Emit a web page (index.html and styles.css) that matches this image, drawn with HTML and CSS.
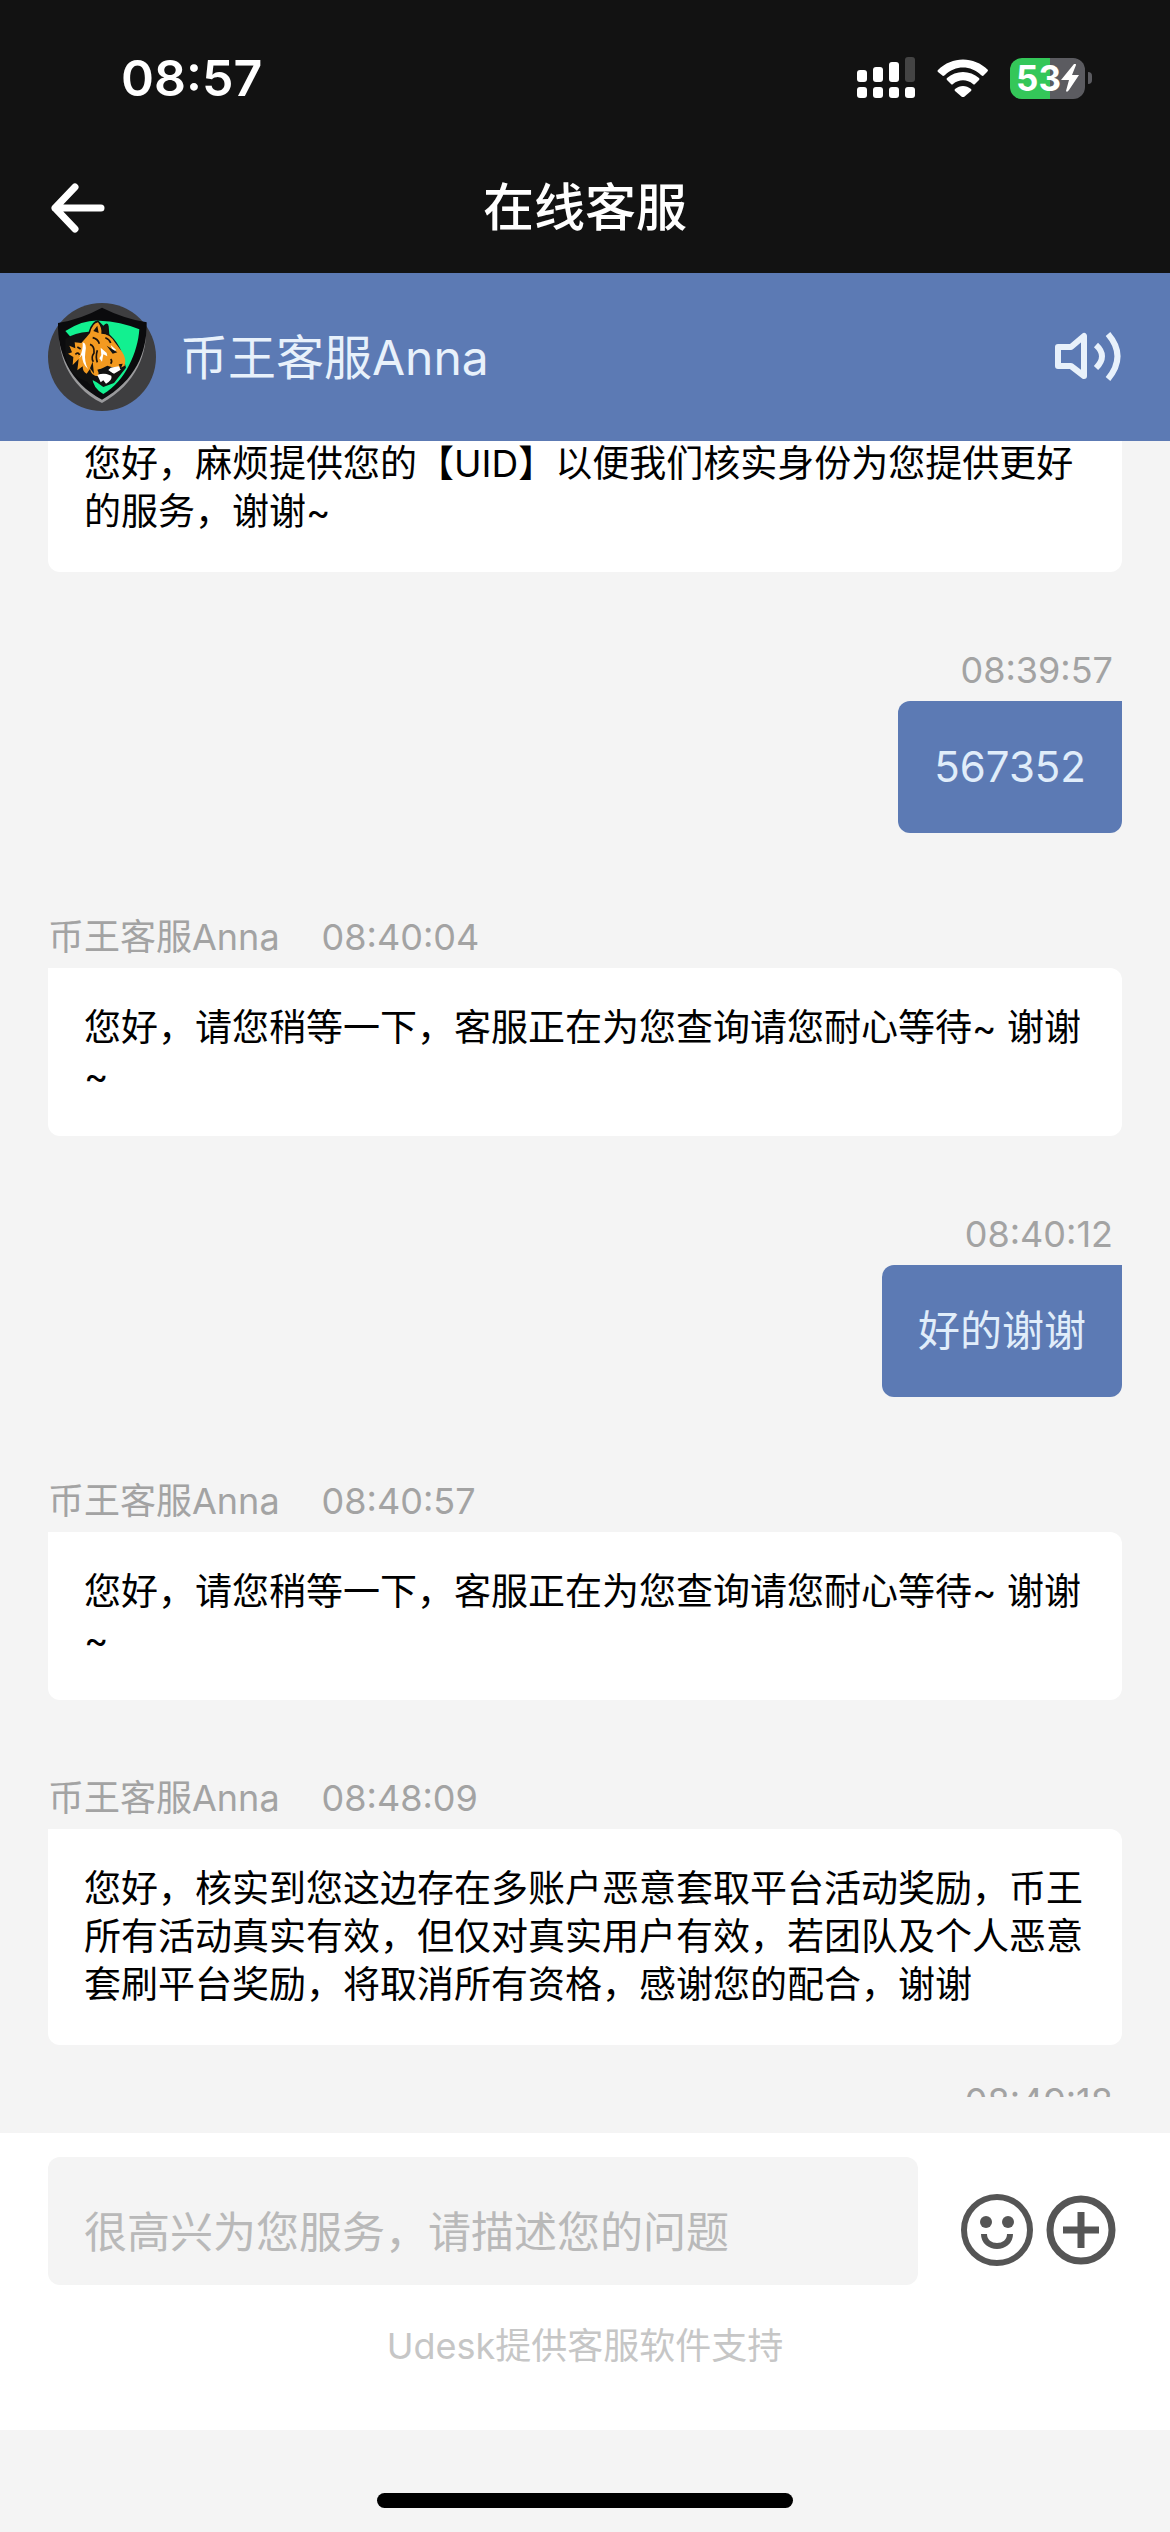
FILE: index.html
```html
<!DOCTYPE html>
<html lang="zh-CN">
  <head>
    <meta charset="utf-8">
    <title>在线客服</title>
    <meta name="viewport" content="width=device-width, initial-scale=1.0">
    <link rel="stylesheet" href="styles.css">
  </head>
  <body>
    <div class="status-bar">
      <span class="clock">08:57</span>
      <div class="status-icons">
        <svg class="signal" width="58" height="42" viewBox="0 0 58 42" fill="#fff">
          <rect x="0" y="13" width="10" height="12" rx="3"/>
          <rect x="16" y="10" width="10" height="15" rx="3"/>
          <rect x="32" y="5" width="10" height="20" rx="3"/>
          <rect x="48" y="0" width="10" height="25" rx="3" fill="#444"/>
          <rect x="0" y="30" width="10" height="11" rx="3"/>
          <rect x="16" y="30" width="10" height="11" rx="3"/>
          <rect x="32" y="30" width="10" height="11" rx="3"/>
          <rect x="48" y="30" width="10" height="11" rx="3"/>
        </svg>
        <svg class="wifi" width="52" height="38" viewBox="0 0 52 38" fill="#fff">
          <path d="M1 11C15-3 37-3 51 11Q51 12 50 13L46 17Q45 17 44 16C34 6 18 6 8 16Q7 17 6 17L1 13Q0 12 1 11Z"/>
          <path d="M10 19C19 11 33 11 42 19Q43 20 42 21L38 25Q37 26 36 25C30 20 22 20 16 25Q15 26 14 25L10 21Q9 20 10 19Z"/>
          <path d="M18 30C23 26 29 26 34 30Q35 31 34 32L27 38Q26 38 25 38L18 32Q17 31 18 30Z"/>
        </svg>
        <div class="battery">
          <div class="battery-body">
            <span>53</span>
            <svg width="18" height="28" viewBox="0 0 18 28" fill="#fff">
              <path d="M13 0L0 16H8L5 27Q6 29 8 26L18 11H11L15 1Q15-1 13 0Z"/>
            </svg>
          </div>
          <div class="battery-tip"></div>
        </div>
      </div>
    </div>

    <header class="nav">
      <button type="button" class="back" aria-label="返回">
        <svg width="56" height="50" viewBox="0 0 56 50" fill="none" stroke="#fff" stroke-width="7" stroke-linecap="round" stroke-linejoin="round">
          <path d="M26 4L6 25L26 46M6 25H52"/>
        </svg>
      </button>
      <h1>在线客服</h1>
    </header>

    <div class="agent">
      <svg class="avatar" width="108" height="108" viewBox="24 38 324 324">
        <circle cx="186" cy="200" r="162" fill="#3e3e40"/>
        <path d="M58 100Q124 88 186 58Q250 88 318 98C324 190 290 280 186 338C84 286 50 190 58 100Z" fill="#9a9a9c"/>
        <path d="M54 98Q124 86 186 52Q250 84 320 96C322 186 286 272 186 328C88 276 52 186 54 98Z" fill="#0b0b0d"/>
        <path d="M76 122Q130 88 178 91Q242 93 298 117C294 184 256 274 190 311Q158 294 156 258L110 160Z" fill="#12f090"/>
        <path d="M76 146Q104 126 146 124Q156 92 174 90L190 106Q204 92 206 108L208 132Q236 158 246 188L258 232L222 278L190 290L170 276L156 268Q158 296 142 274Q84 256 76 190Z" fill="#111"/>
        <path d="M150 128Q158 98 174 96Q186 112 184 130Q210 130 226 158L246 184Q260 204 254 226L234 236L202 226L178 238L174 258Q154 258 150 236L140 250Q128 246 128 228L112 240L116 206L98 224L100 200L84 190L96 186L88 166L106 174L104 156L124 158L140 140Z" fill="#f39a20"/>
        <path d="M188 124L198 104Q206 112 202 134ZM160 122L172 106L176 128Z" fill="#1b120c"/>
        <path d="M128 156Q142 160 136 186Q132 214 144 236Q126 220 126 194L118 204Q130 178 128 156ZM182 172L200 188L202 198L190 192L186 214L178 204L184 194ZM212 164L228 178L220 188ZM212 232L236 228L242 238L222 250L202 242ZM172 254Q186 244 214 256Q218 268 198 280L190 270L182 276Z" fill="#fff"/>
        <path d="M200 166L232 186L218 190ZM172 238Q190 232 206 240L222 252L198 248L178 252ZM236 222L248 220L242 236ZM150 234L158 214L162 250Z" fill="#111"/>
        <path d="M158 142Q174 146 178 160M150 162Q164 166 162 188Q152 202 160 214M196 142Q208 146 212 158M172 180Q166 200 172 216M112 170L122 176M106 192Q116 184 118 194M212 206Q218 212 212 220" fill="none" stroke="#1b120c" stroke-width="5"/>
      </svg>
      <span class="agent-name">币王客服Anna</span>
      <button type="button" class="sound" aria-label="声音">
        <svg width="68" height="54" viewBox="0 0 68 54" fill="none" stroke="#e8f1fb" stroke-width="6">
          <path d="M4 17H17L30 6V46L17 36H4Z" stroke-linejoin="round"/>
          <path d="M42 15Q54 26 42 38"/>
          <path d="M54 4Q73 26 54 49"/>
        </svg>
      </button>
    </div>

    <main class="chat">
      <ul class="messages">
        <li class="message">
          <p class="bubble">您好，麻烦提供您的【UID】以便我们核实身份为您提供更好的服务，谢谢~</p>
        </li>
        <li class="message mine">
          <div class="meta"><time>08:39:57</time></div>
          <p class="bubble">567352</p>
        </li>
        <li class="message">
          <div class="meta"><span>币王客服Anna</span><time>08:40:04</time></div>
          <p class="bubble">您好，请您稍等一下，客服正在为您查询请您耐心等待~ 谢谢~</p>
        </li>
        <li class="message mine">
          <div class="meta"><time>08:40:12</time></div>
          <p class="bubble">好的谢谢</p>
        </li>
        <li class="message">
          <div class="meta"><span>币王客服Anna</span><time>08:40:57</time></div>
          <p class="bubble">您好，请您稍等一下，客服正在为您查询请您耐心等待~ 谢谢~</p>
        </li>
        <li class="message latest">
          <div class="meta"><span>币王客服Anna</span><time>08:48:09</time></div>
          <p class="bubble">您好，核实到您这边存在多账户恶意套取平台活动奖励，币王所有活动真实有效，但仅对真实用户有效，若团队及个人恶意套刷平台奖励，将取消所有资格，感谢您的配合，谢谢</p>
        </li>
        <li class="message mine">
          <div class="meta"><time>08:49:18</time></div>
        </li>
      </ul>
    </main>

    <footer class="composer">
      <form class="composer-row">
        <input type="text" aria-label="问题" placeholder="很高兴为您服务，请描述您的问题">
        <button type="button" aria-label="表情">
          <svg width="74" height="74" viewBox="0 0 74 74" fill="none" stroke="#555" stroke-width="6">
            <circle cx="37" cy="37" r="33"/>
            <circle cx="26" cy="29" r="6" fill="#555" stroke="none"/>
            <circle cx="48" cy="29" r="6" fill="#555" stroke="none"/>
            <path d="M24 41C24 57 50 57 50 41"/>
          </svg>
        </button>
        <button type="button" aria-label="更多">
          <svg width="70" height="70" viewBox="0 0 70 70" fill="none" stroke="#555" stroke-width="7">
            <circle cx="35" cy="35" r="31"/>
            <path d="M17 35H53M35 17V53"/>
          </svg>
        </button>
      </form>
      <p class="powered">Udesk提供客服软件支持</p>
    </footer>

    <div class="home-area"><div class="home-bar"></div></div>
  </body>
</html>
```
FILE: styles.css
```css
* {
  box-sizing: border-box;
}
body {
  margin: 0;
  height: 100vh;
  display: flex;
  flex-direction: column;
  background-color: #f4f4f4;
  font-family: Inter, "Noto Sans CJK SC", sans-serif;
}
button {
  display: flex;
  padding: 0;
  border: none;
  background: none;
  cursor: pointer;
}
p, h1, ul {
  margin: 0;
  padding: 0;
}

/* status bar */
.status-bar {
  flex: none;
  height: 156px;
  padding: 0 78px 0 121px;
  display: flex;
  align-items: center;
  justify-content: space-between;
  background-color: #121212;
  color: #fff;
}
.clock {
  font-size: 50px;
  font-weight: 600;
}
.status-icons {
  display: flex;
  align-items: center;
}
.wifi {
  margin: 0 21px 0 22px;
}
.battery {
  display: flex;
  align-items: center;
  gap: 3px;
}
.battery-body {
  width: 75px;
  height: 41px;
  border-radius: 12px;
  display: flex;
  align-items: center;
  justify-content: center;
  background: linear-gradient(to right, #34c759 53%, #5b5b60 53%);
  font-size: 35px;
  line-height: 41px;
  font-weight: 700;
}
.battery-tip {
  width: 4px;
  height: 12px;
  border-radius: 0 4px 4px 0;
  background-color: #5b5b60;
}

/* title */
.nav {
  flex: none;
  height: 117px;
  padding: 0 49px 14px;
  display: grid;
  grid-template-columns: 56px 1fr 56px;
  align-items: center;
  background-color: #121212;
  color: #fff;
}
.nav h1 {
  font-size: 51px;
  line-height: 72px;
  font-weight: 500;
  text-align: center;
}

/* agent */
.agent {
  flex: none;
  height: 168px;
  padding: 0 48px;
  display: flex;
  align-items: center;
  background-color: #5c7ab4;
}
.agent-name {
  flex: 1;
  margin-left: 24px;
  padding-bottom: 6px;
  font-size: 48px;
  color: #e8f1fb;
}

/* chat */
.chat {
  flex: 1;
  min-height: 0;
  margin-bottom: 36px;
  padding: 0 48px;
  overflow: hidden;
}
.messages {
  margin-top: -37px;
  list-style: none;
}
.message {
  margin-bottom: 73px;
}
.message.latest {
  margin-bottom: 31px;
}
.meta {
  display: flex;
  gap: 42px;
  margin-bottom: 6px;
  font-size: 36px;
  line-height: 50px;
  color: #a3a3a3;
}
.bubble {
  padding: 36px;
  border-radius: 0 12px 12px 12px;
  background-color: #fff;
  color: #000;
  font-size: 37px;
  line-height: 48px;
}
.mine {
  display: flex;
  flex-direction: column;
  align-items: flex-end;
  margin-bottom: 79px;
}
.mine .meta {
  padding-right: 9px;
}
.mine .bubble {
  border-radius: 12px 0 12px 12px;
  background-color: #5c7ab4;
  color: #e0edfa;
  font-size: 42px;
  line-height: 60px;
}

/* composer */
.composer {
  flex: none;
  padding: 24px 48px 57px;
  background-color: #fff;
}
.composer-row {
  display: flex;
  align-items: center;
  gap: 12px;
}
.composer-row input {
  flex: 1;
  min-width: 0;
  height: 128px;
  margin-right: 30px;
  padding: 22px 36px 0;
  border: none;
  border-radius: 12px;
  background-color: #f4f4f4;
  font-family: inherit;
  font-size: 43px;
}
.composer-row input::placeholder {
  color: #b9b9b9;
}
.composer-row button {
  margin-top: 18px;
}
.composer-row button:last-child {
  margin-right: 6px;
}
.powered {
  margin-top: 34px;
  text-align: center;
  font-size: 36px;
  line-height: 54px;
  color: #c6c6c6;
}
.home-area {
  flex: none;
  height: 102px;
  padding-top: 63px;
}
.home-bar {
  width: 416px;
  height: 15px;
  margin: 0 auto;
  border-radius: 8px;
  background-color: #000;
}
```
